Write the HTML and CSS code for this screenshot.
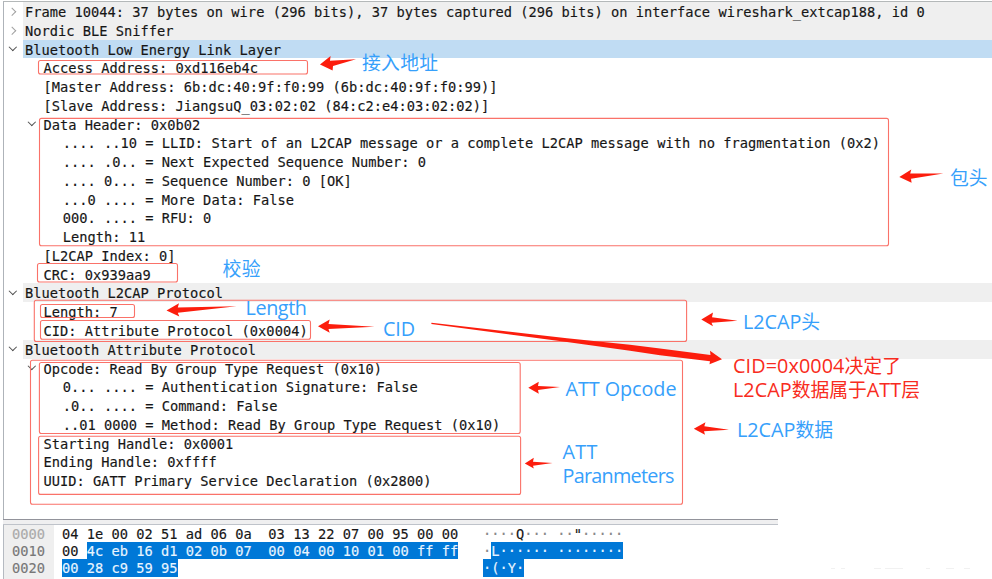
FILE: index.html
```html
<!DOCTYPE html>
<html lang="zh-CN">
<head>
<meta charset="utf-8">
<title>BLE packet details</title>
<link rel="stylesheet" href="styles.css">
</head>
<body>
<main class="capture">
<section class="tree">
<div class="row top shaded"><i class="chev closed"></i><span>Frame 10044: 37 bytes on wire (296 bits), 37 bytes captured (296 bits) on interface wireshark_extcap188, id 0</span></div>
<div class="row top shaded"><i class="chev closed"></i><span>Nordic BLE Sniffer</span></div>
<div class="row top selected"><i class="chev"></i><span>Bluetooth Low Energy Link Layer</span></div>
<div class="row field"><span>Access Address: 0xd116eb4c</span></div>
<div class="row field"><span>[Master Address: 6b:dc:40:9f:f0:99 (6b:dc:40:9f:f0:99)]</span></div>
<div class="row field"><span>[Slave Address: JiangsuQ_03:02:02 (84:c2:e4:03:02:02)]</span></div>
<div class="row field"><i class="chev"></i><span>Data Header: 0x0b02</span></div>
<div class="row bits"><span>.... ..10 = LLID: Start of an L2CAP message or a complete L2CAP message with no fragmentation (0x2)</span></div>
<div class="row bits"><span>.... .0.. = Next Expected Sequence Number: 0</span></div>
<div class="row bits"><span>.... 0... = Sequence Number: 0 [OK]</span></div>
<div class="row bits"><span>...0 .... = More Data: False</span></div>
<div class="row bits"><span>000. .... = RFU: 0</span></div>
<div class="row bits"><span>Length: 11</span></div>
<div class="row field"><span>[L2CAP Index: 0]</span></div>
<div class="row field"><span>CRC: 0x939aa9</span></div>
<div class="row top shaded"><i class="chev"></i><span>Bluetooth L2CAP Protocol</span></div>
<div class="row field"><span>Length: 7</span></div>
<div class="row field"><span>CID: Attribute Protocol (0x0004)</span></div>
<div class="row top shaded"><i class="chev"></i><span>Bluetooth Attribute Protocol</span></div>
<div class="row field"><i class="chev"></i><span>Opcode: Read By Group Type Request (0x10)</span></div>
<div class="row bits"><span>0... .... = Authentication Signature: False</span></div>
<div class="row bits"><span>.0.. .... = Command: False</span></div>
<div class="row bits"><span>..01 0000 = Method: Read By Group Type Request (0x10)</span></div>
<div class="row field"><span>Starting Handle: 0x0001</span></div>
<div class="row field"><span>Ending Handle: 0xffff</span></div>
<div class="row field"><span>UUID: GATT Primary Service Declaration (0x2800)</span></div>
</section>
<div class="splitter"></div>
<section class="hex">
<div class="offsets"><div class="line faint">0000</div><div class="line">0010</div><div class="line">0020</div></div>
<div class="bytes">
<div class="line">04 1e 00 02 51 ad 06 0a  03 13 22 07 00 95 00 00   <span class="dots">····</span>Q<span class="dots">··· ··</span>"<span class="dots">·····</span></div>
<div class="line">00 <mark>4c eb 16 d1 02 0b 07  00 04 00 10 01 00 ff ff</mark>   <span class="dots">·</span><mark>L······ ········</mark></div>
<div class="line"><mark>00 28 c9 59 95</mark>                                     <mark>·(·Y·</mark></div>
</div>
</section>
<svg class="notes" width="992" height="579" viewBox="0 0 992 579">
<g class="box">
<rect x="38.5" y="60.5" width="269" height="13.5" rx="2"/>
<rect x="39.5" y="118.4" width="849" height="127.4" rx="2"/>
<rect x="37.5" y="263.5" width="140" height="18.5" rx="2"/>
<rect x="34.3" y="300.3" width="652.3" height="41.2" rx="2"/>
<rect x="40.5" y="304.5" width="94" height="13" rx="2"/>
<rect x="40.5" y="320.5" width="270" height="18.7" rx="2"/>
<rect x="30.5" y="360.3" width="652" height="144" rx="2"/>
<rect x="39.4" y="362.5" width="480.8" height="71" rx="2"/>
<rect x="38.6" y="436.2" width="482" height="58.2" rx="2"/>
</g>
<g class="arrow">
<path d="M320 64.4L330.6 56L330 60.8L356 59.2L333 66L332.6 70.4Z"/>
<path d="M899.3 177L911.3 169.5L910.2 173.5L943.3 173.4L911 178.8L911.6 182.8Z"/>
<path d="M166.5 310.5L179 303.2L177.8 307.4L236.5 306.3L177.8 312.7L179.3 316.5Z"/>
<path d="M318 326.3L329.7 319.5L328.5 324L374.5 326.8L328.5 329L329.7 332.8Z"/>
<path d="M701.3 319.4L713 312.5L712 317.2L737.5 320.8L711.5 322.7L713 326.2Z"/>
<path d="M431.3 324L431.5 322.7L567 338.3L630 344.8L660 348.5L710.5 355L710 350.8L722 359.2L709.5 364.3L710 361.2L660 355.2L630 350.7L567 342Z"/>
<path d="M528.3 387.7L538.8 381.8L538 386L560 387L538 390L538.8 393.8Z"/>
<path d="M693.8 428.7L705.5 422.2L704.3 426.3L729 429.8L704 431.2L705 434.8Z"/>
<path d="M524.8 463.5L533.8 457.8L533 461.8L552.5 463L533 465.7L533.8 468.5Z"/>
</g>
<g class="label">
<text x="362" y="69.5" textLength="76">接入地址</text>
<text x="950" y="184.5" textLength="37.5">包头</text>
<text x="222.5" y="276.3" textLength="38">校验</text>
<text class="latin" x="245.5" y="315" textLength="61.5">Length</text>
<text class="latin" x="383" y="335.7" textLength="32">CID</text>
<text x="743" y="329.3" textLength="77"><tspan class="latin">L2CAP</tspan>头</text>
<text class="latin" x="565.5" y="396" textLength="111">ATT Opcode</text>
<text x="737" y="437.3" textLength="96"><tspan class="latin">L2CAP</tspan>数据</text>
<text class="latin" x="562.5" y="459" textLength="35">ATT</text>
<text class="latin" x="562.5" y="483" textLength="112">Paranmeters</text>
</g>
<g class="label alert">
<text x="733" y="373" textLength="168"><tspan class="latin">CID=0x0004</tspan>决定了</text>
<text x="733" y="397" textLength="187"><tspan class="latin">L2CAP</tspan>数据属于<tspan class="latin">ATT</tspan>层</text>
</g>
<path class="trace" d="M831 568.5h4M841 568.5h4M874 568.5h7M885 568.5h18M926 568.5h4M946 568.5h8M964 568.5h6"/>
</svg>
</main>
</body>
</html>
```
FILE: styles.css
```css
body {
  margin: 0;
  background: #fff;
}

.capture {
  position: relative;
  box-sizing: border-box;
  width: 992px;
  height: 579px;
  padding: 1px 0 0 3px;
  overflow: hidden;
  font: 13.7px "DejaVu Sans Mono", monospace;
  letter-spacing: 0.014px;
  -webkit-text-stroke: 0.15px;
  color: #161616;
}

.tree {
  box-sizing: border-box;
  height: 518px;
  border-top: 1px solid #b4b8b9;
  border-left: 1px solid #aeb3b9;
}

.row {
  position: relative;
  height: 18.77px;
  line-height: 20.8px;
  white-space: pre;
}

.top {
  margin-left: 18.5px;
  padding-left: 2.5px;
}

.shaded {
  background: #efefef;
}

.selected {
  background: #c0dcf3;
}

.field {
  padding-left: 39.5px;
}

.bits {
  padding-left: 58.8px;
}

.chev {
  position: absolute;
  left: -12.8px;
  top: 4.5px;
  width: 4.6px;
  height: 4.6px;
  border: solid #505050;
  border-width: 0 1.6px 1.6px 0;
  transform: rotate(45deg);
}

.chev.closed {
  left: -14px;
  top: 7px;
  border-color: #a0a0a0;
  transform: rotate(-45deg);
}

.field .chev {
  left: 24.5px;
}

.splitter {
  box-sizing: border-box;
  width: 775px;
  height: 6px;
  border-top: 1px solid #92939b;
  border-bottom: 1.5px solid #bfc3ca;
  background: #efeff0;
}

.hex {
  display: flex;
  height: 54px;
  border-left: 1px solid #b5bac1;
}

.offsets {
  width: 41.5px;
  padding-left: 8px;
  background: #efefef;
  color: #777;
}

.faint {
  color: #aaa;
}

.bytes {
  padding-left: 8.5px;
}

.line {
  height: 17.2px;
  line-height: 19px;
  white-space: pre;
}

.line mark {
  display: inline-block;
  height: 17.2px;
  vertical-align: top;
  background: #0078d7;
  color: #e9f5ff;
}

.dots {
  color: #888;
}

.notes {
  position: absolute;
  left: 0;
  top: 0;
}

.box rect {
  fill: none;
  stroke: #fa7269;
  stroke-width: 1.1;
}

.arrow path {
  fill: #fc1d0d;
}

.label text {
  font: 18.8px "Noto Sans", "Noto Sans CJK SC", sans-serif;
  letter-spacing: 0;
  fill: #36a0fb;
  -webkit-text-stroke: 0;
}

.label text.latin,
.label .latin {
  font-family: "Open Sans", sans-serif;
  font-size: 19.8px;
}

.alert text {
  fill: #f82b20;
}

.trace {
  fill: none;
  stroke: #f1f1f1;
}
```
